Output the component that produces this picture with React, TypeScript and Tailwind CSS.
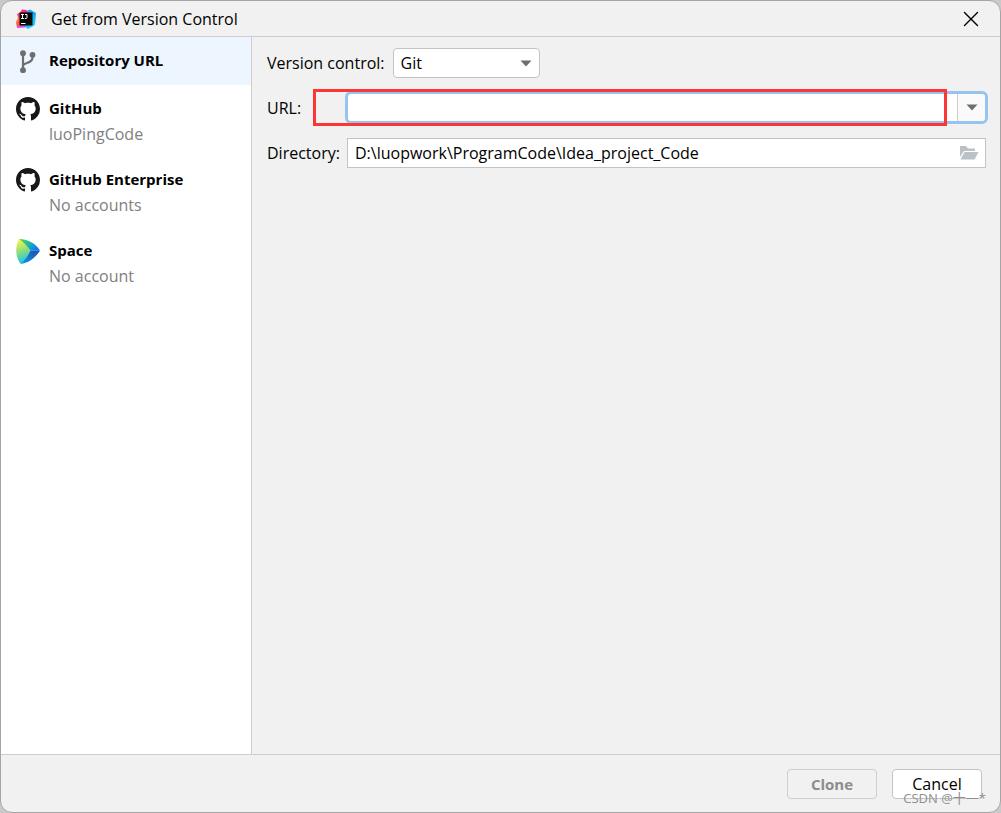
import { useState } from 'react';
import type { ReactNode } from 'react';
import { X } from 'lucide-react';

const IdeaLogo = () => (
  <svg viewBox="0 0 20 20" className="w-5 h-5">
    <defs>
      <linearGradient id="idea-warm" x1="0" y1="0" x2="0.2" y2="1">
        <stop offset="0" stopColor="#fe2857" />
        <stop offset="0.3" stopColor="#ff45a0" />
        <stop offset="0.5" stopColor="#fc801d" />
        <stop offset="0.75" stopColor="#fe5a3c" />
        <stop offset="1" stopColor="#e04af0" />
      </linearGradient>
      <linearGradient id="idea-cool" x1="0" y1="0" x2="0.6" y2="1">
        <stop offset="0" stopColor="#3a9cf5" />
        <stop offset="0.5" stopColor="#0fa5fa" />
        <stop offset="1" stopColor="#21d7ff" />
      </linearGradient>
    </defs>
    <path d="M5 3 L1 5 L2 9 L0 13 L1 19 L9 18.5 L10 3 Z" fill="url(#idea-warm)" />
    <path d="M8 3 L14 0.5 L20 4 L19 16 L12 20 L8 17 Z" fill="url(#idea-cool)" />
    <path d="M4 4 L6 0.5 L10.5 1 L12 4 Z" fill="#fe2877" />
    <rect x="3.5" y="3.5" width="13" height="13" fill="#080808" />
    <path d="M5 5.5 H8 M6.5 5.5 V9.5 M5 9.5 H8 M9 5.5 H11 V8.5 Q11 9.5 10 9.5 H8.8" stroke="#fff" strokeWidth="1" fill="none" />
    <path d="M5 14.5 H9.5" stroke="#fff" strokeWidth="1" />
  </svg>
);

const BranchIcon = () => (
  <svg viewBox="0 0 26 26" className="w-[26px] h-[26px]" fill="none" stroke="#6e6e6e" strokeWidth="2.2">
    <path d="M8 5 V22 M17.5 7 V9.5 C17.5 16 9 14 8 17.5" />
    <circle cx="8" cy="5.2" r="2.9" fill="#6e6e6e" stroke="none" />
    <circle cx="17.5" cy="6.8" r="2.9" fill="#6e6e6e" stroke="none" />
    <circle cx="8" cy="22.2" r="2.9" fill="#6e6e6e" stroke="none" />
  </svg>
);

const GitHubIcon = () => (
  <svg viewBox="0 0 16 16" className="w-6 h-6" fill="#191717">
    <path d="M8 0C3.58 0 0 3.58 0 8c0 3.54 2.29 6.53 5.47 7.59.4.07.55-.17.55-.38 0-.19-.01-.82-.01-1.49-2.01.37-2.53-.49-2.69-.94-.09-.23-.48-.94-.82-1.13-.28-.15-.68-.52-.01-.53.63-.01 1.08.58 1.23.82.72 1.21 1.87.87 2.33.66.07-.52.28-.87.51-1.07-1.78-.2-3.64-.89-3.64-3.95 0-.87.31-1.59.82-2.15-.08-.2-.36-1.02.08-2.12 0 0 .67-.21 2.2.82.64-.18 1.32-.27 2-.27s1.36.09 2 .27c1.53-1.04 2.2-.82 2.2-.82.44 1.1.16 1.92.08 2.12.51.56.82 1.27.82 2.15 0 3.07-1.87 3.75-3.65 3.95.29.25.54.73.54 1.48 0 1.07-.01 1.93-.01 2.2 0 .21.15.46.55.38A8.01 8.01 0 0 0 16 8c0-4.42-3.58-8-8-8z" />
  </svg>
);

const SpaceIcon = () => (
  <svg viewBox="0 0 25 25" className="w-6 h-[25px]" preserveAspectRatio="none">
    <defs>
      <linearGradient id="space-left" x1="0.2" y1="0" x2="0.4" y2="1">
        <stop offset="0" stopColor="#fff945" />
        <stop offset="0.5" stopColor="#8fdc7c" />
        <stop offset="1" stopColor="#13c4f0" />
      </linearGradient>
      <linearGradient id="space-top" x1="0" y1="0" x2="1" y2="0.6">
        <stop offset="0" stopColor="#5ad64a" />
        <stop offset="0.5" stopColor="#22b9a0" />
        <stop offset="1" stopColor="#087cfa" />
      </linearGradient>
      <linearGradient id="space-bottom" x1="0" y1="1" x2="1" y2="0">
        <stop offset="0" stopColor="#0c9cf0" />
        <stop offset="1" stopColor="#1f4aa8" />
      </linearGradient>
    </defs>
    <path d="M3 0 C12 0 20 4 25 11.5 L15 11.5 Z" fill="url(#space-top)" />
    <path d="M25 11.5 C20 19 13 24 5 25 L15 11.5 Z" fill="url(#space-bottom)" />
    <path d="M3 0 C8 3 12 7 15 11.5 C13 17 9 21 5 25 C-1 18 -1 8 3 0 Z" fill="url(#space-left)" />
  </svg>
);

const FolderIcon = () => (
  <svg viewBox="0 0 20 16" className="w-5 h-4" fill="#bcc1c5">
    <path d="M1 1 H7 L9 3.5 H16 V6 H5 L1 12 Z" />
    <path d="M5.5 7 H19.5 L15.5 14.5 H1.5 Z" />
  </svg>
);

const Arrow = () => (
  <svg viewBox="0 0 12 7" className="w-3 h-[7px]" fill="#6e6e6e">
    <path d="M0.5 0.5 H11.5 L6 6.5 Z" />
  </svg>
);

type Source = { title: string; account?: string; icon: ReactNode };

const sources: Source[] = [
  { title: 'Repository URL', icon: <BranchIcon /> },
  { title: 'GitHub', account: 'luoPingCode', icon: <GitHubIcon /> },
  { title: 'GitHub Enterprise', account: 'No accounts', icon: <GitHubIcon /> },
  { title: 'Space', account: 'No account', icon: <SpaceIcon /> },
];

const Sidebar = () => {
  const [active, setActive] = useState(0);

  return (
    <nav className="w-[251px] shrink-0 bg-white border-r border-[#cdcdcd]">
      {sources.map((s, i) => (
        <button
          key={s.title}
          onClick={() => setActive(i)}
          className={`flex w-full min-h-12 items-start gap-2 pl-[14px] pt-[11px] pb-[10px] text-left ${active === i ? 'bg-[#edf5fe]' : ''}`}
        >
          <span className="flex w-[26px] h-[26px] shrink-0 items-center justify-center">{s.icon}</span>
          <span>
            <span className="block text-[15px] leading-6 font-bold text-black">{s.title}</span>
            {s.account && <span className="block pt-[2px] leading-6 text-[#808080]">{s.account}</span>}
          </span>
        </button>
      ))}
    </nav>
  );
};

const App = () => {
  const [url, setUrl] = useState('');
  const [directory, setDirectory] = useState('D:\\luopwork\\ProgramCode\\Idea_project_Code');

  return (
    <div className="min-h-screen flex flex-col bg-[#c9c9c9] font-['Open_Sans','Noto_Sans_CJK_SC',sans-serif] text-base text-black">
      <div className="grow flex flex-col overflow-hidden rounded-xl border border-[#a5a5a5] bg-[#f1f1f1]">
        {/* Title bar */}
        <header className="flex h-9 items-center border-b border-[#cdcdcd] pl-[15px] pr-4">
          <IdeaLogo />
          <h1 className="grow pl-[15px]">Get from Version Control</h1>
          <button aria-label="Close">
            <X className="w-[26px] h-[26px]" strokeWidth={1.3} />
          </button>
        </header>

        <div className="grow flex">
          <Sidebar />

          <main className="grow min-w-0 pl-[15px] pr-[14px] pt-[11px]">
            <div className="flex items-center gap-2">
              <label htmlFor="vcs">Version control:</label>
              <div className="relative">
                <select id="vcs" className="w-[147px] h-[30px] appearance-none rounded border border-[#c4c4c4] bg-white pl-[7px]">
                  <option>Git</option>
                </select>
                <span className="absolute right-2 top-3 pointer-events-none"><Arrow /></span>
              </div>
            </div>

            <div className="mt-[13px] flex items-center">
              <label htmlFor="url" className="w-[78px] shrink-0">URL:</label>
              <div className="relative grow flex">
                <div className="grow flex h-[33px] -mr-0.5 rounded-md border-[3px] border-[#97c3f3] bg-white">
                  <input id="url" value={url} onChange={(e) => setUrl(e.target.value)} className="grow min-w-0 rounded px-2 outline-none" />
                  <button aria-label="Recent URLs" className="w-7 flex items-center justify-center border-l border-[#cdcdcd] rounded-r bg-[#fafafa]">
                    <Arrow />
                  </button>
                </div>
                {/* Highlight frame around the field */}
                <div className="absolute -left-8 right-[39px] -inset-y-0.5 border-[3px] border-[#fc3535] pointer-events-none" />
              </div>
            </div>

            <div className="mt-[14px] flex items-center">
              <label htmlFor="directory" className="w-20 shrink-0">Directory:</label>
              <div className="grow flex h-[30px] items-center border border-[#c4c4c4] bg-white pr-1.5">
                <input id="directory" value={directory} onChange={(e) => setDirectory(e.target.value)} className="grow min-w-0 px-[7px] outline-none" />
                <button aria-label="Browse"><FolderIcon /></button>
              </div>
            </div>
          </main>
        </div>

        {/* Actions */}
        <footer className="relative flex justify-end gap-[15px] border-t border-[#cdcdcd] pt-[14px] pb-[13px] pr-[18px]">
          <button disabled className="w-[90px] h-[30px] rounded border border-[#cfcfcf] text-[15px] font-bold text-[#8c8c8c]">Clone</button>
          <button className="w-[90px] h-[30px] rounded border border-[#c4c4c4] bg-white">Cancel</button>
          <span className="absolute right-[14px] bottom-1.5 text-[13px] leading-4 text-[#8e8e8e] pointer-events-none">CSDN @十一*</span>
        </footer>
      </div>
    </div>
  );
};

export default App;
